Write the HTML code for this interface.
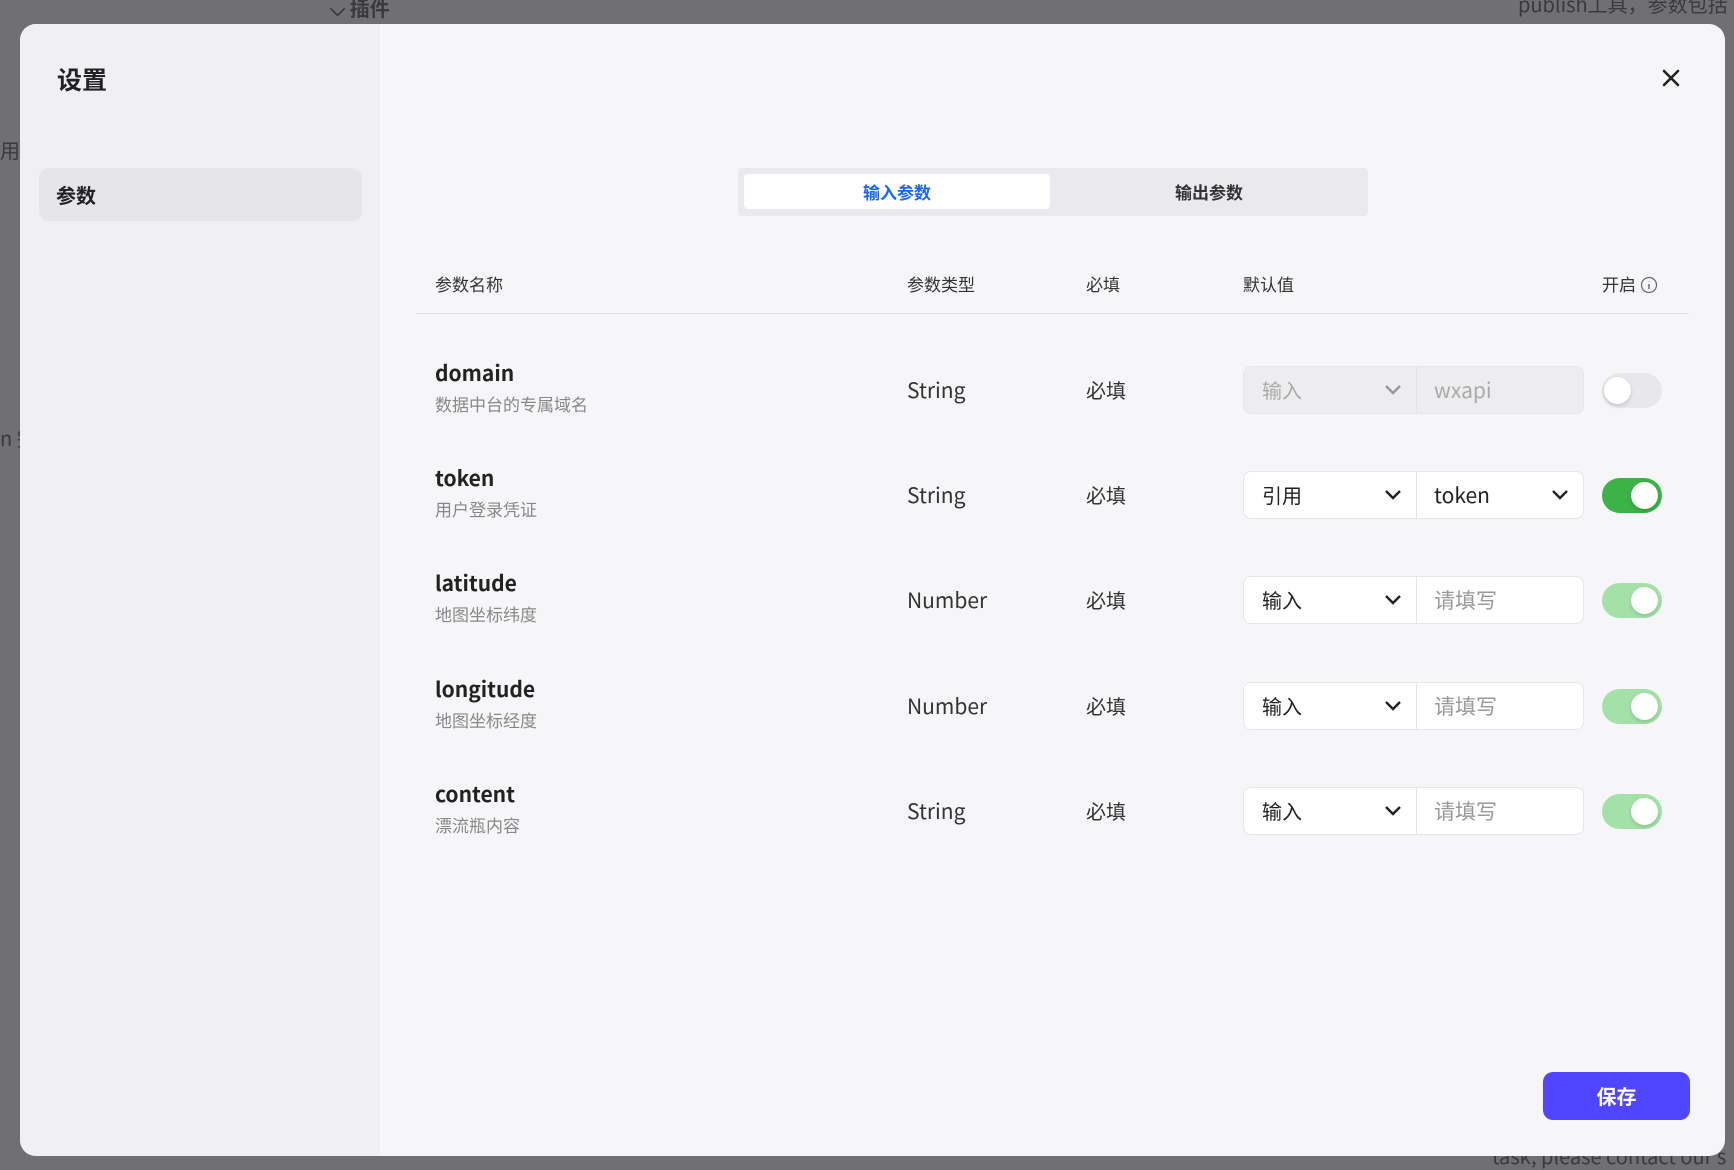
<!DOCTYPE html>
<html><head><meta charset="utf-8"><style>
*{box-sizing:border-box;margin:0;padding:0}
body{width:1734px;height:1167px;background:#6f6f74;font-family:"Noto Sans CJK SC","Liberation Sans",sans-serif;position:relative;overflow:hidden;color:#222;line-height:1.2}
.bg{position:absolute;color:#3a3a3e;font-size:20px}
.modal{position:absolute;left:20px;top:24px;width:1705px;height:1132px;border-radius:16px;overflow:hidden;background:#f6f6f9}
.side{position:absolute;left:0;top:0;width:360px;height:100%;background:#f0f0f4}
.title{position:absolute;left:37px;top:37px;line-height:36px;font-size:25px;font-weight:bold}
.item{position:absolute;left:19px;top:144px;width:323px;height:53px;background:#e5e5ea;border-radius:10px;font-size:20px;font-weight:bold;line-height:53px;padding-left:17px}
.close{position:absolute;left:1641px;top:44px}
.tabs{position:absolute;left:718px;top:144px;width:630px;height:48px;background:#eaeaee;border-radius:4px}
.tab{position:absolute;top:6px;height:35px;line-height:35px;text-align:center;font-size:17px;font-weight:bold}
.hdr{position:absolute;top:247px;line-height:26px;font-size:17px;color:#333}
.line{position:absolute;left:396px;top:289px;width:1273px;height:1px;background:#e2e2e6}
.row{position:absolute;left:0;width:100%;height:0}
.nm{position:absolute;left:415px;top:-32px;line-height:30px;font-size:21px;font-weight:bold;color:#222}
.ds{position:absolute;left:415px;top:2px;line-height:24px;font-size:17px;color:#888}
.ty{position:absolute;left:887px;top:-15px;line-height:30px;font-size:21px;color:#333}
.rq{position:absolute;left:1066px;top:-15px;line-height:30px;font-size:20px;color:#333}
.grp{position:absolute;left:1223px;top:-24px;width:341px;height:48px;border:1px solid #e6e6ea;border-radius:8px;background:#fff}
.grp.dis{background:#ededf0;color:#aaa}
.grp .l{position:absolute;left:18px;top:0;line-height:46px;font-size:20px}
.grp .d{position:absolute;left:172px;top:0;width:1px;height:46px;background:#e4e4e8}
.grp .r{position:absolute;left:190px;top:0;line-height:46px;font-size:21px}
.grp svg{position:absolute;top:17px}
.tg{position:absolute;left:1582px;top:-17px;width:60px;height:35px;border-radius:18px}
.tg i{position:absolute;top:4px;width:27px;height:27px;border-radius:50%;background:#fff;box-shadow:0 2px 4px rgba(0,0,0,.15)}
.save{position:absolute;left:1523px;top:1048px;width:147px;height:48px;border-radius:10px;background:#5046ff;color:#fff;font-size:20px;font-weight:bold;text-align:center;line-height:48px}
</style></head><body>
<div class="bg" style="left:330px;top:-4px;font-weight:bold">⌵ 插件</div>
<div class="bg" style="left:0;top:138px">用扌</div>
<div class="bg" style="left:0;top:426px">n 完</div>
<div class="bg" style="left:1518px;top:-8px">publish工具，参数包括</div>
<div class="bg" style="left:1492px;top:1144px">task, please contact our s</div>
<div class="modal">
<div class="side"><div class="title">设置</div><div class="item">参数</div></div>
<svg class="close" width="20" height="20" viewBox="0 0 20 20"><path d="M3 3L17 17M17 3L3 17" stroke="#222" stroke-width="2.6" stroke-linecap="round"/></svg>
<div class="tabs">
<div class="tab" style="left:6px;width:306px;background:#fff;border-radius:4px;color:#1a66ff">输入参数</div>
<div class="tab" style="left:318px;width:306px;color:#333">输出参数</div>
</div>
<div class="hdr" style="left:415px">参数名称</div>
<div class="hdr" style="left:887px">参数类型</div>
<div class="hdr" style="left:1066px">必填</div>
<div class="hdr" style="left:1223px">默认值</div>
<div class="hdr" style="left:1582px">开启 <svg width="18" height="18" viewBox="0 0 18 18" style="vertical-align:-3px"><circle cx="9" cy="9" r="7.5" fill="none" stroke="#666" stroke-width="1.2"/><path d="M9 8v5M9 5.2v.6" stroke="#666" stroke-width="1.4"/></svg></div>
<div class="line"></div>

<div class="row" style="top:366px"><div class="nm">domain</div><div class="ds">数据中台的专属域名</div><div class="ty">String</div><div class="rq">必填</div>
<div class="grp dis"><span class="l">输入</span><svg style="left:140px" width="18" height="12" viewBox="0 0 18 12"><path d="M2 2l7 7 7-7" fill="none" stroke="#999" stroke-width="2.4"/></svg><div class="d"></div><span class="r">wxapi</span></div>
<div class="tg" style="background:#e8e8ec"><i style="left:2px"></i></div></div>

<div class="row" style="top:471px"><div class="nm">token</div><div class="ds">用户登录凭证</div><div class="ty">String</div><div class="rq">必填</div>
<div class="grp"><span class="l">引用</span><svg style="left:140px" width="18" height="12" viewBox="0 0 18 12"><path d="M2 2l7 7 7-7" fill="none" stroke="#222" stroke-width="2.4"/></svg><div class="d"></div><span class="r">token</span><svg style="left:307px" width="18" height="12" viewBox="0 0 18 12"><path d="M2 2l7 7 7-7" fill="none" stroke="#222" stroke-width="2.4"/></svg></div>
<div class="tg" style="background:#3bb346"><i style="left:29px"></i></div></div>

<div class="row" style="top:576px"><div class="nm">latitude</div><div class="ds">地图坐标纬度</div><div class="ty">Number</div><div class="rq">必填</div>
<div class="grp"><span class="l">输入</span><svg style="left:140px" width="18" height="12" viewBox="0 0 18 12"><path d="M2 2l7 7 7-7" fill="none" stroke="#222" stroke-width="2.4"/></svg><div class="d"></div><span class="r" style="color:#999">请填写</span></div>
<div class="tg" style="background:#a4e1a9"><i style="left:29px"></i></div></div>

<div class="row" style="top:682px"><div class="nm">longitude</div><div class="ds">地图坐标经度</div><div class="ty">Number</div><div class="rq">必填</div>
<div class="grp"><span class="l">输入</span><svg style="left:140px" width="18" height="12" viewBox="0 0 18 12"><path d="M2 2l7 7 7-7" fill="none" stroke="#222" stroke-width="2.4"/></svg><div class="d"></div><span class="r" style="color:#999">请填写</span></div>
<div class="tg" style="background:#a4e1a9"><i style="left:29px"></i></div></div>

<div class="row" style="top:787px"><div class="nm">content</div><div class="ds">漂流瓶内容</div><div class="ty">String</div><div class="rq">必填</div>
<div class="grp"><span class="l">输入</span><svg style="left:140px" width="18" height="12" viewBox="0 0 18 12"><path d="M2 2l7 7 7-7" fill="none" stroke="#222" stroke-width="2.4"/></svg><div class="d"></div><span class="r" style="color:#999">请填写</span></div>
<div class="tg" style="background:#a4e1a9"><i style="left:29px"></i></div></div>

<div class="save">保存</div>
</div>
</body></html>
